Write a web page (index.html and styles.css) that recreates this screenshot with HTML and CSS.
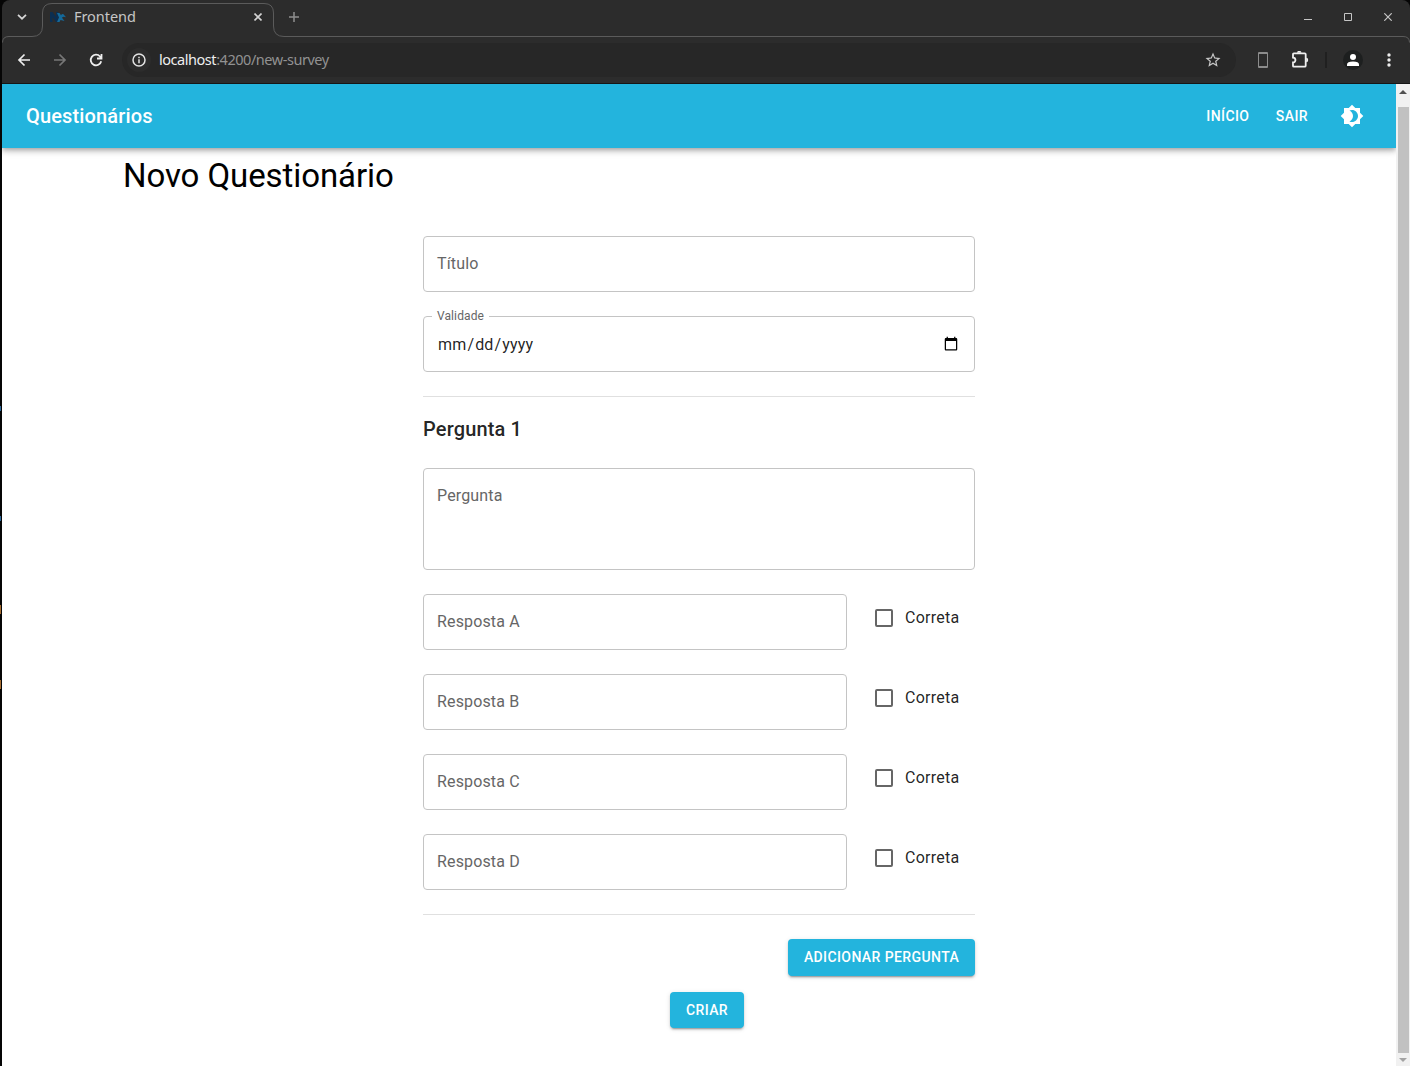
FILE: index.html
```html
<!DOCTYPE html>
<html lang="pt-BR">
<head>
<meta charset="utf-8">
<title>Frontend</title>
<link rel="stylesheet" href="styles.css">
</head>
<body>
<div class="desktop">
<div class="behind"><i class="mark blue"></i><i class="mark blue m2"></i><i class="mark orange"></i><i class="mark orange m4"></i></div>
<div class="window">
  <header class="chrome">
    <svg class="tab-outline" width="1408" height="84" viewBox="2 0 1408 84" fill="none" stroke="#5b5b5b"><path d="M2.5 42.5Q2.5 36.5 9 36.5H32Q42.5 36.5 42.5 26V13Q42.5 3.500 52 3.500H264Q273.500 3.500 273.500 13V26Q273.500 36.500 284 36.500H1403Q1409.500 36.500 1409.500 42.500"/></svg>
    <div class="tabs">
      <svg class="chevron" width="10" height="6" viewBox="0 0 10 6" fill="none" stroke="#d6d6d6" stroke-width="1.7"><path d="M1 .8 5 4.700 9 .8"/></svg>
      <div class="tab">
        <svg width="16" height="16" viewBox="0 0 16 16"><path d="M0 13V3h2.500L6 8V3h2.500v10H6L2.500 8v5Z" fill="#0b2e51"/><path d="M7 4h2.500L11 6.200Q12 4.500 13.500 5.200L16 8.200Q13 7 12 8.800L14.500 12 10.500 11 9.500 13H7l2-4.500Z" fill="#14699a"/></svg>
        <span class="tab-title">Frontend</span>
        <svg class="tab-close" width="8" height="8" viewBox="0 0 8 8" stroke="#d3d3d3" stroke-width="1.600"><path d="m.5.5 7 7m0-7-7 7"/></svg>
      </div>
      <svg class="plus" width="10" height="10" viewBox="0 0 10 10" stroke="#8e8e8e" stroke-width="1.500"><path d="M5 0v10M0 5h10"/></svg>
      <div class="controls">
        <svg width="8" height="10" viewBox="0 0 8 10" stroke="#c6c6c6"><path d="M0 7.500h8"/></svg>
        <svg width="8" height="8" viewBox="0 0 8 8" stroke="#c6c6c6" fill="none"><path d="M.5.5h7v7h-7z"/></svg>
        <svg width="8" height="8" viewBox="0 0 8 8" stroke="#c6c6c6" stroke-width="1.200"><path d="m.3.300 7.400 7.400m0-7.400L.3 7.700"/></svg>
      </div>
    </div>
    <div class="toolbar">
      <svg class="back" width="16" height="16" viewBox="0 0 16 16" fill="none" stroke="#eee" stroke-width="1.700"><path d="M14 8H3m5.500-5.500L3 8l5.500 5.500"/></svg>
      <svg class="forward" width="16" height="16" viewBox="0 0 16 16" fill="none" stroke="#777" stroke-width="1.700"><path d="M2 8h11M7.500 2.500 13 8l-5.500 5.500"/></svg>
      <svg class="reload" width="16" height="16" viewBox="0 0 16 16" fill="none" stroke="#eee" stroke-width="1.800"><path d="M13.200 9.200A5.300 5.300 0 1 1 12 4.500L13.200 6M13.500 2v4.500H9"/></svg>
      <div class="address">
        <span class="site"><svg width="14" height="14" viewBox="0 0 14 14" fill="none" stroke="#e3e3e3" stroke-width="1.500"><circle cx="7" cy="7" r="6"/><path d="M7 6.200v4M7 3.800v1.400"/></svg></span>
        <span class="url"><b>localhost</b>:4200/new-survey</span>
        <svg class="star" width="18" height="18" viewBox="0 0 24 24" fill="#c7c7c7"><path d="m22 9.240-7.190-.62L12 2 9.190 8.630 2 9.240l5.460 4.730L5.820 21 12 17.270 18.180 21l-1.630-7.030zM12 15.400l-3.760 2.270 1-4.280-3.320-2.880 4.380-.38L12 6.100l1.710 4.040 4.380.38-3.320 2.880 1 4.280z"/></svg>
      </div>
      <svg class="phone" width="10" height="16" viewBox="0 0 10 16" fill="none" stroke="#8d8d8d"><path d="M.5.5h9v15h-9zM1 1.500h8M1 14.500h8"/></svg>
      <svg class="puzzle" width="17" height="17" viewBox="0 0 17 17"><path d="M1.800 2.300H12.700Q13.700 2.300 13.700 3.300V14.700Q13.700 15.700 12.700 15.700H1.800Q1 15.700 1 14.900V11.500A2.300 2.300 0 0 0 1 6.600V3.100Q1 2.300 1.800 2.300Z" fill="none" stroke="#efefef" stroke-width="1.800"/><path d="M5 1.800a2.200 2 0 0 1 4.400 0zM14.200 6.800a2 2.200 0 0 1 0 4.400z" fill="#efefef"/></svg>
      <i class="separator"></i>
      <span class="avatar"><svg width="12" height="12" viewBox="0 0 12 12" fill="#fff"><circle cx="6" cy="3" r="3"/><path d="M0 12v-1.500Q0 7.500 6 7.500t6 3V12z"/></svg></span>
      <svg class="menu" width="4" height="14" viewBox="0 0 4 14" fill="#eee"><circle cx="2" cy="2" r="1.700"/><circle cx="2" cy="7" r="1.700"/><circle cx="2" cy="12" r="1.700"/></svg>
    </div>
  </header>
  <div class="viewport">
    <div class="page">
      <nav class="appbar">
        <span class="brand">Questionários</span>
        <a class="nav-link">INÍCIO</a>
        <a class="nav-link exit">SAIR</a>
        <svg class="theme" width="24" height="24" viewBox="0 0 24 24" fill="#fff"><path d="M20 8.690V4h-4.690L12 .69 8.690 4H4v4.690L.69 12 4 15.310V20h4.690L12 23.310 15.310 20H20v-4.690L23.310 12 20 8.690zM12 18c-.89 0-1.740-.2-2.500-.55C11.560 16.500 13 14.420 13 12s-1.440-4.500-3.500-5.450C10.260 6.200 11.110 6 12 6c3.310 0 6 2.690 6 6s-2.690 6-6 6z"/></svg>
      </nav>
      <main class="content">
        <h1>Novo Questionário</h1>
        <form class="survey">
          <div class="field">Título</div>
          <fieldset class="date-field"><legend>Validade</legend><input type="date" aria-label="Validade"></fieldset>
          <hr>
          <h2>Pergunta 1</h2>
          <div class="field question">Pergunta</div>
          <div class="answer"><div class="field">Resposta A</div><label><i class="box"></i>Correta</label></div>
          <div class="answer"><div class="field">Resposta B</div><label><i class="box"></i>Correta</label></div>
          <div class="answer"><div class="field">Resposta C</div><label><i class="box"></i>Correta</label></div>
          <div class="answer"><div class="field">Resposta D</div><label><i class="box"></i>Correta</label></div>
          <hr>
          <button type="button" class="button add">ADICIONAR PERGUNTA</button>
          <button type="button" class="button create">CRIAR</button>
        </form>
      </main>
    </div>
    <div class="scrollbar">
      <svg width="8" height="4" viewBox="0 0 8 4" fill="#505050"><path d="M0 4 4 0l4 4z"/></svg>
      <i class="thumb"></i>
      <svg width="8" height="4" viewBox="0 0 8 4" fill="#a3a3a3"><path d="m0 0 4 4 4-4z"/></svg>
    </div>
  </div>
</div>
</div>
</body>
</html>
```
FILE: styles.css
```css
* { box-sizing: border-box; }
body { margin: 0; overflow: hidden; font: 16px/24px Roboto, sans-serif; color: rgba(0,0,0,.87); }
svg, i { display: block; flex: none; }
.desktop { display: flex; width: 1410px; height: 1066px; background: #050505; }
.behind { width: 2px; padding-top: 406px; }
.mark { width: 1px; height: 5px; }
.blue { background: #2b6699; }
.m2 { margin-top: 105px; }
.orange { margin-top: 84px; background: #a76d31; height: 9px; }
.m4 { margin-top: 66px; }
.window { width: 1408px; display: flex; flex-direction: column; }
.chrome { position: relative; height: 84px; background: #2c2c2c; border-bottom: 1px solid #161616; border-radius: 8px 8px 0 0; }
.tab-outline { position: absolute; left: 0; top: 0; }
.tabs { height: 36px; display: flex; align-items: center; padding: 0 18px 3px 15px; }
.tab { width: 231px; margin-left: 15px; padding: 0 11px 0 8px; display: flex; align-items: center; }
.tab-title { margin: -2px 0 0 8px; font: 14.5px/20px "Noto Sans", sans-serif; letter-spacing: -.05px; color: #c6c6c6; }
.tab-close { margin-left: auto; }
.plus { margin-left: 16px; }
.controls { margin-left: auto; display: flex; gap: 32px; align-items: center; }
.toolbar { height: 47px; display: flex; align-items: center; padding: 0 19px 0 14px; }
.forward { margin-left: 20px; }
.reload { margin-left: 20px; }
.address { width: 1114px; height: 34px; margin-left: 18px; border-radius: 17px; background: #272727; display: flex; align-items: center; padding: 0 14px 0 5px; }
.site { width: 24px; height: 24px; border-radius: 50%; background: #2c2c2c; display: grid; place-items: center; }
.url { margin: -2px 0 0 8px; font: 14.5px/20px "Noto Sans", sans-serif; letter-spacing: -.46px; color: #929292; }
.url b { font-weight: 400; color: #eee; }
.star { margin-left: auto; }
.phone { margin-left: 22px; }
.puzzle { margin-left: 24px; }
.separator { width: 2px; height: 16px; margin-left: 16px; background: #202020; }
.avatar { width: 20px; height: 20px; margin-left: 16px; border-radius: 50%; background: #1d1f1f; display: grid; place-items: center; }
.menu { margin-left: 24px; }
.viewport { height: 982px; display: flex; background: #fff; }
.page { width: 1394px; overflow: hidden; }
.appbar { height: 64px; background: #23b4dd; color: #fff; display: flex; align-items: center; padding: 0 32px 0 24px; box-shadow: 0 2px 4px -1px rgba(0,0,0,.2), 0 4px 5px rgba(0,0,0,.14), 0 1px 10px rgba(0,0,0,.12); }
.brand { margin-right: auto; font-size: 20px; font-weight: 500; letter-spacing: .15px; }
.nav-link { font-size: 14px; font-weight: 500; letter-spacing: .4px; }
.exit { margin-left: 26.5px; }
.theme { margin-left: 32px; }
.content { padding: 7px 121px 0; }
h1 { margin: 0; font-size: 33px; font-weight: 400; line-height: 42px; letter-spacing: -.08px; color: #000; }
.survey { width: 552px; margin: 39px 0 0 300px; display: flex; flex-direction: column; gap: 24px; }
.field { height: 56px; padding: 15px 13px; border: 1px solid #c4c4c4; border-radius: 4px; color: #666; letter-spacing: .15px; }
.date-field { height: 62px; margin: -6px 0 0; padding: 0 13px 0 8px; border: 1px solid #c4c4c4; border-radius: 4px; min-width: 0; }
.date-field legend { font-size: 12px; line-height: 12px; height: 12px; padding: 0 5px; color: #666; letter-spacing: .1px; }
.date-field input { display: block; width: 524px; height: 24px; margin: 11px 0 0 5px; padding: 0; border: 0; outline: 0; background: none; font: inherit; color: inherit; letter-spacing: .15px; }
.date-field input::-webkit-calendar-picker-indicator { position: relative; top: -1px; }
hr { width: 100%; height: 1px; margin: 0; border: 0; background: #e0e0e0; }
h2 { margin: -8px 0 0; font-size: 20px; line-height: 32px; font-weight: 500; letter-spacing: .15px; }
.question { height: 102px; margin-top: -1px; }
.answer { display: flex; }
.answer .field { width: 424px; }
.answer label { margin: 12px 0 0 28px; height: 24px; display: flex; align-items: center; letter-spacing: .24px; }
.box { width: 18px; height: 18px; margin-right: 12px; border: 2px solid #666; border-radius: 2px; }
.button { border: 0; border-radius: 4px; padding: 0; background: #23b4dd; color: #fff; font: 500 14px/24px Roboto, sans-serif; letter-spacing: .4px; box-shadow: 0 3px 1px -2px rgba(0,0,0,.2), 0 2px 2px rgba(0,0,0,.14), 0 1px 5px rgba(0,0,0,.12); }
.add { width: 187px; height: 37px; padding-bottom: 2px; align-self: flex-end; }
.create { width: 74px; height: 36px; margin: -8px 0 0 247px; }
.scrollbar { width: 14px; background: #f1f1f1; display: flex; flex-direction: column; align-items: center; padding: 6px 0 4px; }
.thumb { width: 11px; height: 946px; margin: 13px 0 auto 1px; background: #c1c1c1; }
```
